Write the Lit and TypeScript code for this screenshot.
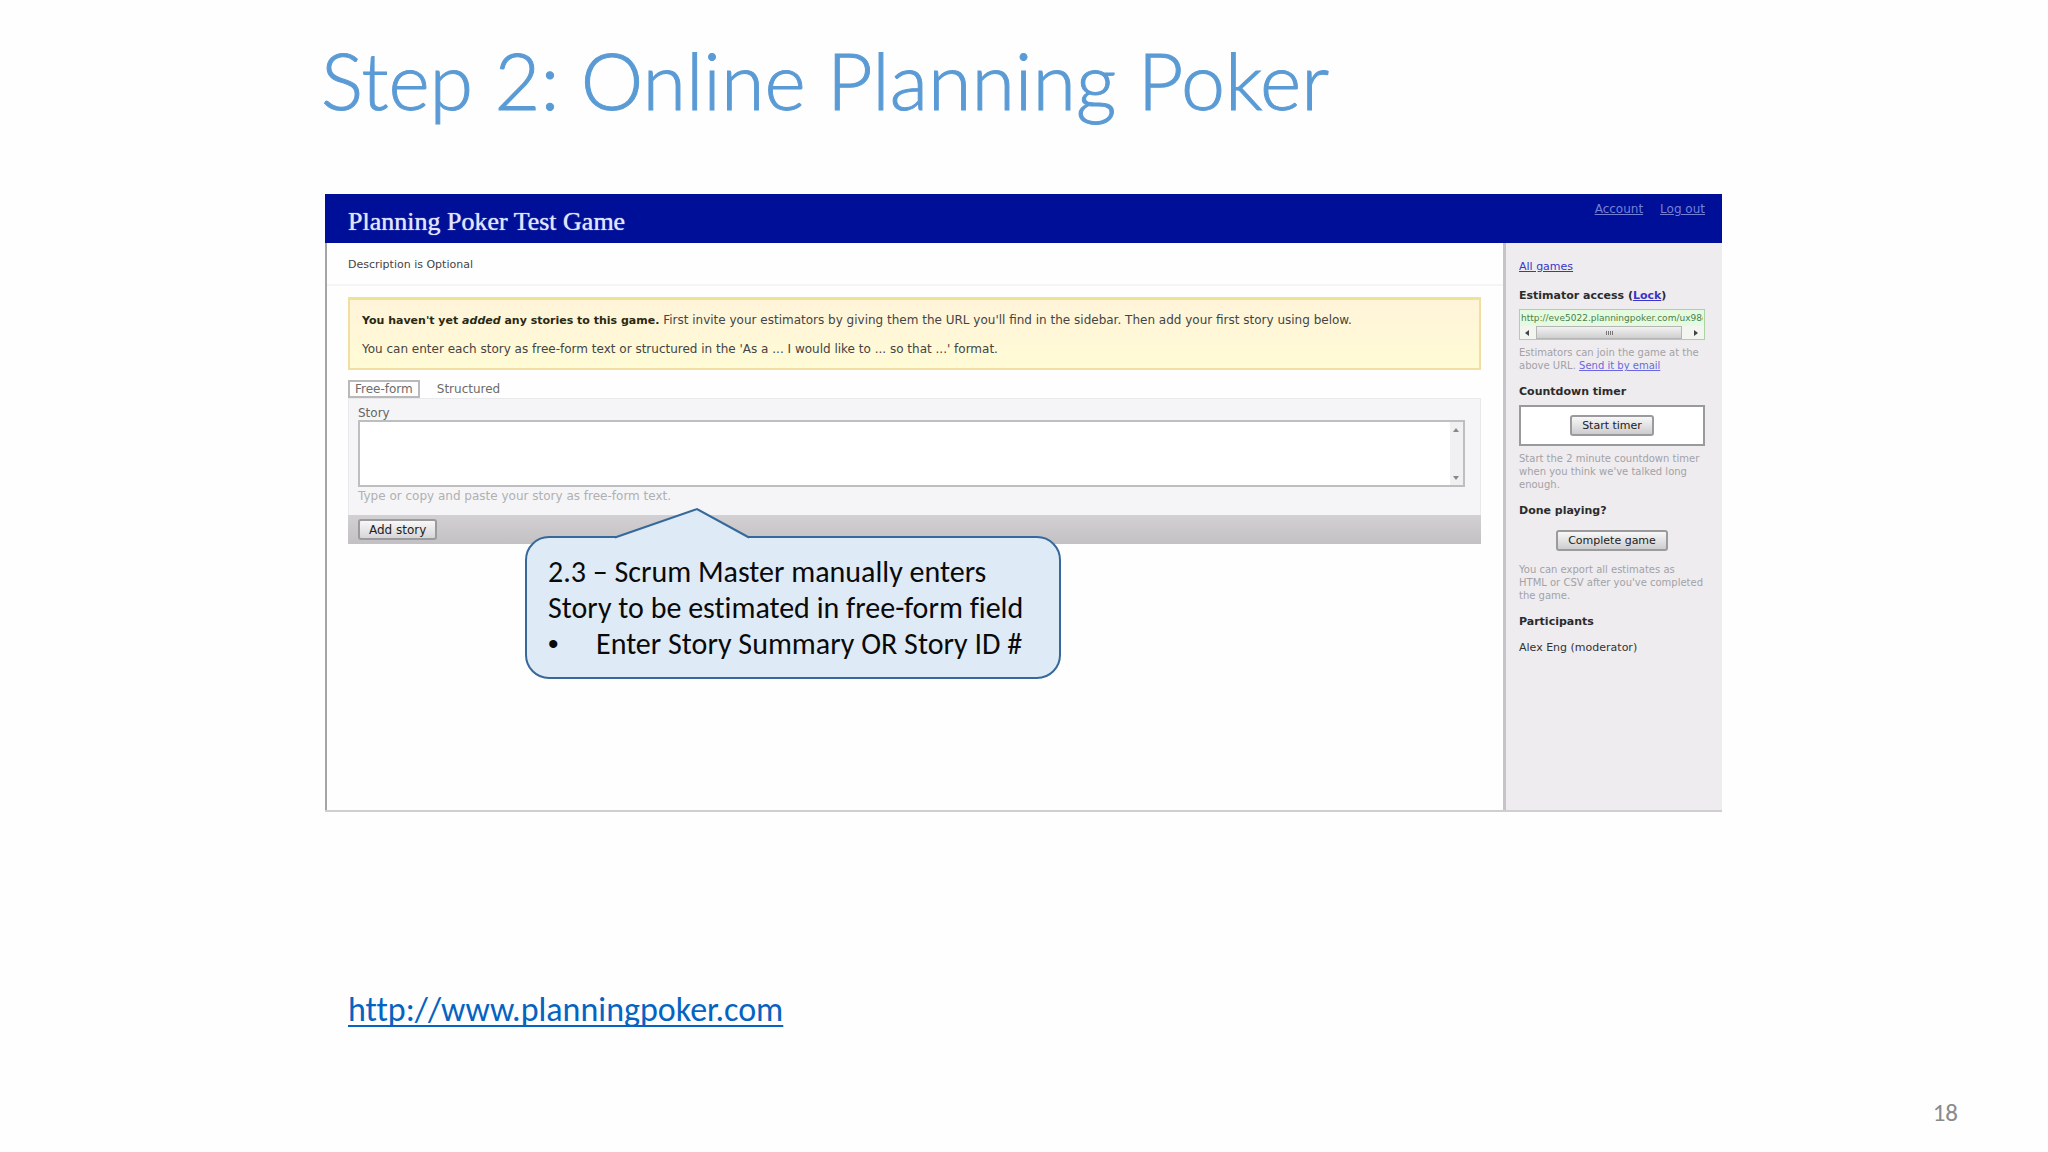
import { LitElement, html, css } from "lit";
import { customElement, property } from "lit/decorators.js";

/** Sidebar of the game window: access link, timer, completion, participants. */
@customElement("game-sidebar")
class GameSidebar extends LitElement {
  @property() url = "http://eve5022.planningpoker.com/ux98c";

  static styles = css`
    :host {
      display: block;
      box-sizing: border-box;
      padding: 16px 17px 20px 13px;
      border-left: 3px solid #c6c4c8;
      background: #eeecef;
      color: #333;
      font: 11px/16px "DejaVu Sans", Verdana, sans-serif;
    }
    a {
      color: #3a35c8;
    }
    h2 {
      margin: 12px 0 5px;
      font-size: 11px;
      line-height: 16px;
      color: #2b2b2b;
    }
    .all {
      margin: 0 0 13px;
    }
    .hint {
      margin: 6px 0 0;
      font-size: 10px;
      line-height: 13px;
      color: #a3a2a6;
    }
    .hint a {
      color: #6a68e0;
    }
    .access {
      display: block;
      border: 1px solid #a9d3a4;
      background: #e4fbe0;
    }
    .url {
      display: block;
      box-sizing: border-box;
      width: 100%;
      height: 16px;
      margin: 0;
      padding: 0 1px;
      border: 0;
      outline: 0;
      background: none;
      color: #4c7d4c;
      font: 9px/16px "DejaVu Sans", Verdana, sans-serif;
    }
    .scroll {
      display: flex;
      align-items: center;
      height: 13px;
      background: #f3f5f1;
    }
    .scroll svg {
      flex: none;
      width: 16px;
      height: 14px;
      fill: #444;
    }
    .thumb {
      flex: 1;
      display: flex;
      align-items: center;
      justify-content: center;
      gap: 1px;
      height: 11px;
      margin-right: 6px;
      border: 1px solid #b5b5b5;
      background: linear-gradient(#f2f2f2, #cfcfcf);
    }
    .thumb i {
      width: 1px;
      height: 4px;
      background: #777;
    }
    .timer {
      display: flex;
      justify-content: center;
      padding: 8px;
      border: 2px solid #9a9a9c;
      background: #fff;
    }
    .done {
      display: flex;
      justify-content: center;
      padding: 6px 0;
    }
    button {
      height: 21px;
      padding: 0 10px;
      border: 2px solid #9b9b9e;
      border-radius: 3px;
      background: linear-gradient(#f8f8f8, #cdcccf);
      color: #222;
      font: 11px/16px "DejaVu Sans", Verdana, sans-serif;
    }
    .people {
      margin: 10px 0 0;
      padding: 0;
      list-style: none;
    }
  `;

  render() {
    return html`
      <p class="all"><a href="#games">All games</a></p>
      <h2>Estimator access (<a href="#lock">Lock</a>)</h2>
      <div class="access">
        <input class="url" aria-label="Estimator access" readonly .value=${this.url} />
        <div class="scroll">
          <svg viewBox="0 0 16 14"><path d="M9 4v6L5 7z" /></svg>
          <div class="thumb"><i></i><i></i><i></i><i></i></div>
          <svg viewBox="0 0 16 14"><path d="M6 4v6l4-3z" /></svg>
        </div>
      </div>
      <p class="hint">
        Estimators can join the game at the above URL. <a href="#email">Send it by email</a>
      </p>
      <h2>Countdown timer</h2>
      <div class="timer"><button type="button">Start timer</button></div>
      <p class="hint">Start the 2 minute countdown timer when you think we've talked long enough.</p>
      <h2>Done playing?</h2>
      <div class="done"><button type="button">Complete game</button></div>
      <p class="hint">You can export all estimates as HTML or CSV after you've completed the game.</p>
      <h2>Participants</h2>
      <ul class="people">
        <li>Alex Eng (moderator)</li>
      </ul>
    `;
  }
}

/** Form in which the moderator types a new story. */
@customElement("story-form")
class StoryForm extends LitElement {
  static styles = css`
    :host {
      display: block;
      color: #666;
      font: 12px/16px "DejaVu Sans", Verdana, sans-serif;
    }
    .tabs {
      display: flex;
      gap: 10px;
    }
    .tab {
      height: 18px;
      padding: 0 5px;
      border: 2px solid transparent;
      background: none;
      color: #6c6c6c;
      font: 12px/14px "DejaVu Sans", Verdana, sans-serif;
    }
    .tab.on {
      border-color: #b9b9bb;
      background: #fdfdfd;
    }
    .panel {
      padding: 7px 15px 10px 9px;
      border: 1px solid #e9e9eb;
      border-width: 1px 1px 0;
      background: #f5f5f7;
    }
    label {
      display: block;
      line-height: 14px;
    }
    .field {
      display: flex;
      height: 63px;
      border: 2px solid #bebec0;
      background: #fff;
    }
    textarea {
      flex: 1;
      padding: 4px;
      border: 0;
      outline: 0;
      resize: none;
      background: none;
      font: inherit;
    }
    .track {
      display: flex;
      flex-direction: column;
      justify-content: space-between;
      width: 13px;
      background: #f0eff1;
    }
    .track svg {
      width: 13px;
      height: 16px;
      fill: #888;
    }
    .hint {
      margin: 1px 0;
      color: #b0b0b2;
    }
    .bar {
      padding: 4px 10px;
      background: linear-gradient(#d2d0d3, #c3c1c4);
    }
    .add {
      display: block;
      height: 21px;
      padding: 0 9px;
      border: 2px solid #9b9b9e;
      border-radius: 3px;
      background: linear-gradient(#f8f8f8, #d6d5d8);
      color: #222;
      font: 12px/16px "DejaVu Sans", Verdana, sans-serif;
    }
  `;

  render() {
    return html`
      <div class="tabs">
        <button class="tab on" type="button">Free-form</button>
        <button class="tab" type="button">Structured</button>
      </div>
      <div class="panel">
        <label for="story">Story</label>
        <div class="field">
          <textarea id="story"></textarea>
          <div class="track">
            <svg viewBox="0 0 13 16"><path d="M3 10h6L6 6z" /></svg>
            <svg viewBox="0 0 13 16"><path d="M3 7h6l-3 4z" /></svg>
          </div>
        </div>
        <p class="hint">Type or copy and paste your story as free-form text.</p>
      </div>
      <div class="bar"><button class="add" type="button">Add story</button></div>
    `;
  }
}

/** Speech-bubble note laid over the game window. */
@customElement("note-callout")
class NoteCallout extends LitElement {
  static styles = css`
    :host {
      display: block;
      box-sizing: border-box;
      width: 536px;
      padding: 16px 18px 15px 21px;
      border: 2px solid #36689b;
      border-radius: 24px;
      background: #deeaf6;
      color: #0a0a0a;
      font: 30px/36px Carlito, Calibri, Lato, sans-serif;
      font-variant-ligatures: none;
    }
    p,
    ul {
      margin: 0;
      padding: 0;
    }
    li {
      display: flex;
      list-style: none;
    }
    li::before {
      content: "•";
      flex: none;
      width: 48px;
      font-family: "Liberation Sans", Arial, sans-serif;
    }
    .tail {
      position: absolute;
      left: 87px;
      top: -31px;
      width: 136px;
      height: 32px;
      fill: #deeaf6;
      stroke: #36689b;
      stroke-width: 2;
    }
  `;

  render() {
    return html`
      <svg class="tail" viewBox="0 0 136 32">
        <path d="M2 32V30L83 2L134 30V32" stroke="none" />
        <path d="M1 30.500L83 2L135 30.500" fill="none" />
      </svg>
      <p>2.3 – Scrum Master manually enters Story to be estimated in free-form field</p>
      <ul>
        <li>Enter Story Summary OR Story ID #</li>
      </ul>
    `;
  }
}

@customElement("app-root")
class AppRoot extends LitElement {
  static styles = css`
    :host {
      display: block;
      background: #fefefe;
      font-family: Carlito, Calibri, Lato, sans-serif;
      font-variant-ligatures: none;
    }
    .slide {
      box-sizing: border-box;
      min-height: 100vh;
      display: flex;
      flex-direction: column;
      padding: 32px 90px 24px 0;
    }
    .body {
      box-sizing: border-box;
      padding: 0 236px 0 325px;
    }
    h1 {
      margin: 0 0 66px -4px;
      color: #5b9bd5;
      font: 300 79px/96px Lato, "Open Sans", sans-serif;
      -webkit-text-stroke: 1px #5b9bd5;
    }
    .window {
      position: relative;
      display: grid;
      grid-template-columns: 1fr 219px;
      grid-template-rows: auto 1fr;
      min-height: 618px;
      box-sizing: border-box;
      border-bottom: 2px solid #d0ced1;
    }
    header {
      grid-column: 1 / -1;
      display: flex;
      justify-content: space-between;
      box-sizing: border-box;
      height: 49px;
      padding: 0 17px 0 23px;
      background: #000f97;
    }
    h2 {
      margin: 0;
      color: #dfe5ff;
      font: 26px/56px "Liberation Serif", Georgia, serif;
      text-shadow: 0 0 1px #dfe5ff;
    }
    nav {
      display: flex;
      gap: 17px;
      font: 12px/31px "DejaVu Sans", Verdana, sans-serif;
    }
    nav a {
      color: #7480d8;
    }
    main {
      border-left: 2px solid #a5a5a7;
      background: #fefefe;
      color: #444;
      font: 12px/16px "DejaVu Sans", Verdana, sans-serif;
    }
    .desc {
      margin: 0;
      padding: 14px 21px 11px;
      border-bottom: 2px solid #f5f5f6;
      font-size: 11px;
    }
    .content {
      padding: 11px 22px 20px 21px;
    }
    .notice {
      margin-bottom: 10px;
      padding: 12px 12px 11px;
      border: 2px solid #f0dfa0;
      border-top: 3px solid #ebe592;
      background: linear-gradient(#fff4d9, #fffbd6);
    }
    .notice p {
      margin: 0;
    }
    .notice p + p {
      margin-top: 12px;
    }
    .notice strong {
      font-size: 11px;
      color: #2b2810;
    }
    note-callout {
      position: absolute;
      left: 200px;
      top: 342px;
    }
    .site {
      display: inline-block;
      margin: 178px 0 0 23px;
      color: #0563c1;
      font-size: 34px;
      line-height: 40px;
      text-decoration-thickness: 2px;
      text-decoration-skip-ink: none;
      text-underline-offset: 4px;
    }
    .num {
      margin-top: auto;
      text-align: right;
      color: #8a8a8a;
      font-size: 25px;
      line-height: 30px;
    }
  `;

  render() {
    return html`
      <div class="slide">
        <div class="body">
          <h1>Step 2: Online Planning Poker</h1>
          <section class="window">
            <header>
              <h2>Planning Poker Test Game</h2>
              <nav><a href="#account">Account</a><a href="#logout">Log out</a></nav>
            </header>
            <main>
              <p class="desc">Description is Optional</p>
              <div class="content">
                <div class="notice">
                  <p>
                    <strong>You haven't yet <em>added</em> any stories to this game.</strong>
                    First invite your estimators by giving them the URL you'll find in the sidebar.
                    Then add your first story using below.
                  </p>
                  <p>
                    You can enter each story as free-form text or structured in the 'As a ... I would
                    like to ... so that ...' format.
                  </p>
                </div>
                <story-form></story-form>
              </div>
            </main>
            <game-sidebar></game-sidebar>
            <note-callout></note-callout>
          </section>
          <a class="site" href="http://www.planningpoker.com">http://www.planningpoker.com</a>
        </div>
        <div class="num">18</div>
      </div>
    `;
  }
}
